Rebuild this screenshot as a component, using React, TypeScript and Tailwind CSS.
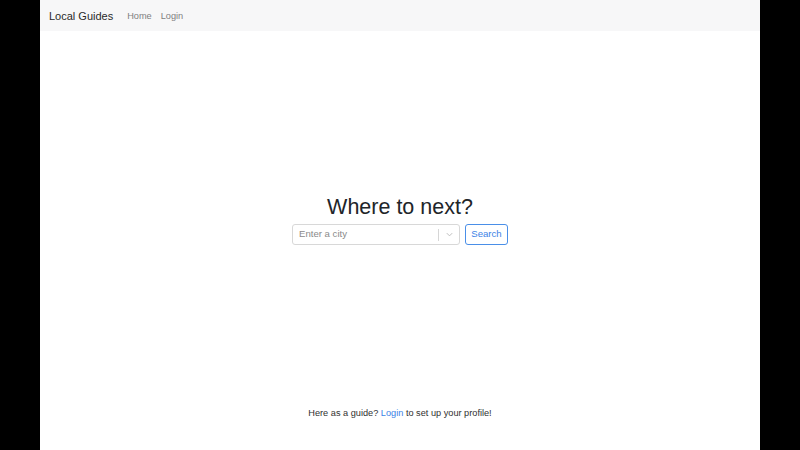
export default function App() {
  return (
    <div className="min-h-[450px] w-full bg-black flex justify-center font-['Liberation_Sans',Arial,sans-serif]">
      <div className="w-[720px] h-[450px] bg-white flex flex-col">
        {/* navbar */}
        <nav className="h-[31px] shrink-0 bg-[#f7f7f8] flex items-center pl-[9px] pt-[2px]">
          <span className="text-[11px] text-[#2a2a2a] mr-[14px]">Local Guides</span>
          <a className="text-[9.2px] text-[#808080] mr-[9px]">Home</a>
          <a className="text-[9.2px] text-[#808080]">Login</a>
        </nav>

        {/* hero */}
        <div className="h-[376px] flex flex-col items-center justify-center">
          <h1 className="text-[21.5px] leading-[26px] text-[#212529] mb-[4px]">Where to next?</h1>
          <div className="flex items-center gap-[5px]">
            <div className="w-[168px] h-[21px] border border-[#d8d8d8] rounded-[3px] flex items-center pt-px">
              <span className="flex-1 pl-[6px] text-[9.6px] text-[#8a8a8a]">Enter a city</span>
              <span className="w-px h-[12px] bg-[#d6d6d6]" />
              <span className="w-[20px] flex items-center justify-center">
                <svg viewBox="0 0 10 10" className="w-[9px] h-[9px] text-[#b8b8b8]" fill="none" stroke="currentColor" strokeWidth={1}>
                  <path d="M2 3.5l3 3 3-3" />
                </svg>
              </span>
            </div>
            <button className="w-[43px] h-[21px] border border-[#4a8fe8] rounded-[3px] text-[9.6px] text-[#3b82e6] bg-white pt-px">
              Search
            </button>
          </div>
        </div>

        {/* footer */}
        <p className="text-center text-[9.2px] text-[#303030]">
          Here as a guide? <a className="text-[#3b82e6]">Login</a> to set up your profile!
        </p>
      </div>
    </div>
  )
}
